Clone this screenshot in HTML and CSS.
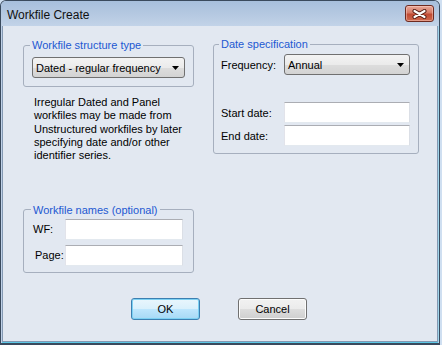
FILE: index.html
```html
<!DOCTYPE html>
<html lang="en">
<head>
    <meta charset="UTF-8">
    <title>Workfile Create</title>
    <link rel="stylesheet" href="styles.css">
</head>
<body>

    <div class="window">
        <div class="titlebar">
            <span class="title">Workfile Create</span>
            <button class="close" aria-label="Close">
                <svg width="15" height="10" viewBox="0 0 15 10">
                    <path d="M2.5 2 L12.5 8 M12.5 2 L2.5 8" stroke="#4e1810" stroke-width="4" stroke-linecap="round"/>
                    <path d="M2.5 2 L12.5 8 M12.5 2 L2.5 8" stroke="#ffffff" stroke-width="2.2" stroke-linecap="round"/>
                </svg>
            </button>
        </div>

        <div class="client">
            <div class="columns">
                <div class="col-left">
                    <fieldset class="group group-type">
                        <legend>Workfile structure type</legend>
                        <div class="dropdown">
                            <span>Dated - regular frequency</span>
                            <svg class="arrow" width="7" height="4" viewBox="0 0 7 4"><path d="M0 0 H7 L3.5 4 Z" fill="#000"/></svg>
                        </div>
                    </fieldset>

                    <p class="note">Irregular Dated and Panel workfiles may be made from Unstructured workfiles by later specifying date and/or other identifier series.</p>

                    <fieldset class="group group-names">
                        <legend>Workfile names (optional)</legend>
                        <div class="names-grid">
                            <label for="wf">WF:</label>
                            <input type="text" id="wf" class="textbox">
                            <label for="page" class="page-label">Page:</label>
                            <input type="text" id="page" class="textbox">
                        </div>
                    </fieldset>
                </div>

                <div class="col-right">
                    <fieldset class="group group-date">
                        <legend>Date specification</legend>
                        <div class="date-grid">
                            <label>Frequency:</label>
                            <div class="dropdown">
                                <span>Annual</span>
                                <svg class="arrow" width="7" height="4" viewBox="0 0 7 4"><path d="M0 0 H7 L3.5 4 Z" fill="#000"/></svg>
                            </div>
                            <label for="start" class="start-label">Start date:</label>
                            <input type="text" id="start" class="textbox start-box">
                            <label for="end">End date:</label>
                            <input type="text" id="end" class="textbox">
                        </div>
                    </fieldset>
                </div>
            </div>

            <div class="buttons">
                <button class="btn btn-default">OK</button>
                <button class="btn">Cancel</button>
            </div>
        </div>
    </div>

</body>
</html>
```

FILE: styles.css
```css
body {
    margin: 0;
    background-color: #cfdff1;
    font-family: "Liberation Sans", Arial, sans-serif;
    font-size: 11px;
    color: #000;
}
.window {
    width: 440px;
    height: 345px;
    box-sizing: border-box;
    border: 1px solid #3a4a5d;
    border-bottom-width: 2px;
    border-radius: 6px 6px 0 0;
    background-color: #bfd1e8;
    display: flex;
    flex-direction: column;
}
.titlebar {
    height: 25px;
    flex: none;
    display: flex;
    justify-content: space-between;
    align-items: flex-start;
    border-radius: 5px 5px 0 0;
    background: linear-gradient(#a7bfdc, #b7cae2 60%, #c2d3e8);
}
.title {
    margin: 7px 0 0 6px;
    font-size: 12px;
    line-height: 14px;
    color: #111;
}
.close {
    width: 29px;
    height: 17px;
    margin: 4px 5px 0 0;
    padding: 0;
    border: 1px solid #6e2a20;
    border-radius: 3px;
    background: linear-gradient(#e9a899, #d57a66 45%, #c04a33 55%, #cf6a4f);
    box-shadow: inset 0 0 0 1px rgba(255, 220, 210, 0.45);
    display: flex;
    align-items: center;
    justify-content: center;
}
.client {
    flex: 1;
    margin: 0 1px 1px 1px;
    border: 1px solid #8499b3;
    border-top: none;
    background-color: #e2e8f1;
    box-shadow: 0 1px 0 #5cc8e6, 1px 0 0 #9fd6ec;
    padding-top: 11px;
}
.columns {
    display: flex;
    gap: 19px;
    padding-left: 20px;
}
.col-left {
    width: 171px;
    margin-top: 1px;
}
.col-right {
    width: 206px;
}
.group {
    margin: 0;
    min-width: 0;
    border: 1px solid #a6afbe;
    border-radius: 3px;
}
.group legend {
    padding: 0 2px;
    margin-left: -2px;
    color: #1d58d2;
    font-size: 11px;
    line-height: 14px;
}
.group-type {
    padding: 5px 8px 8px 8px;
}
.dropdown {
    height: 21px;
    box-sizing: border-box;
    border: 1px solid #707070;
    border-radius: 3px;
    background: linear-gradient(#f3f3f3, #ebebeb 50%, #dddddd 51%, #d3d3d3);
    display: flex;
    align-items: center;
    justify-content: space-between;
    padding: 0 5px 0 3px;
}
.dropdown span {
    line-height: 14px;
}
.note {
    width: 155px;
    margin: 9px 0 0 11px;
    line-height: 13.3px;
}
.group-names {
    margin-top: 40.5px;
    padding: 2px 10px 6px 9px;
}
.names-grid {
    display: grid;
    grid-template-columns: 32px 118px;
    row-gap: 5px;
    align-items: center;
}
.page-label {
    padding-left: 2px;
}
.textbox {
    height: 21px;
    width: 100%;
    box-sizing: border-box;
    margin: 0;
    padding: 0 3px;
    border: 1px solid;
    border-color: #abadb3 #dbdfe6 #e3e9ef #e2e3ea;
    background: #fff;
    font: inherit;
}
.group-date {
    padding: 3px 8px 7px 7px;
}
.date-grid {
    display: grid;
    grid-template-columns: 63px 126px;
    row-gap: 2px;
    align-items: center;
}
.start-label,
.start-box {
    margin-top: 25px;
}
.buttons {
    display: flex;
    gap: 38px;
    padding-left: 128px;
    margin-top: 25px;
}
.btn {
    width: 69px;
    height: 22px;
    padding: 0;
    border: 1px solid #707070;
    border-radius: 3px;
    background: linear-gradient(#f2f2f2, #ebebeb 50%, #dddddd 51%, #cfcfcf);
    box-shadow: inset 0 0 0 1px #fcfcfc;
    font: inherit;
    color: #000;
}
.btn-default {
    border-color: #3c7fb1;
    background: linear-gradient(#e9f6fd, #d9f0fc 50%, #bee6fd 51%, #a7d9f5);
    box-shadow: inset 0 0 0 1px #7dd1f3;
}
```
